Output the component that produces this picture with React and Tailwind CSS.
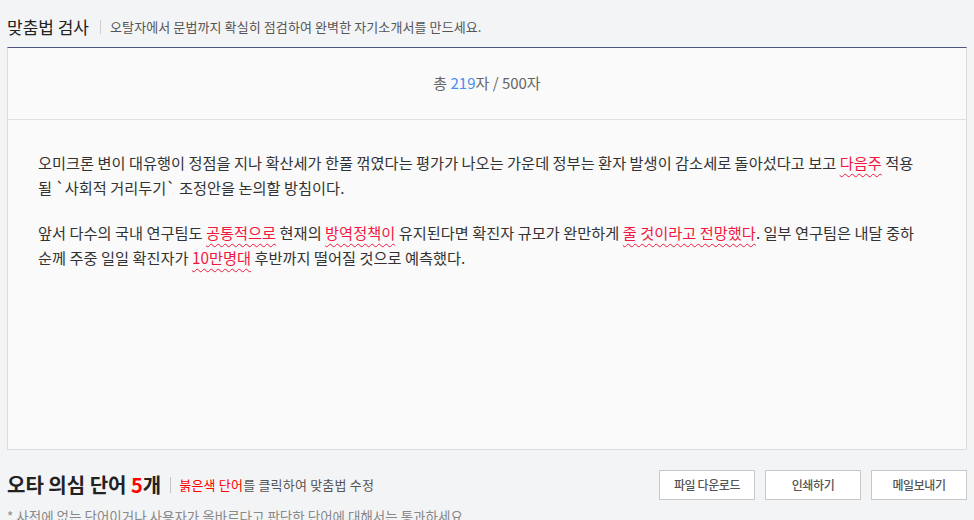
import React from 'react'

const FONT = { fontFamily: '"Noto Sans CJK KR", "Noto Sans", sans-serif' }

// 오타 의심 단어 (붉은 물결 밑줄)
function Typo({ children }) {
  return (
    <span className="text-[#f2173f] underline decoration-wavy decoration-[#f2173f] decoration-1 underline-offset-[4px] cursor-pointer">
      {children}
    </span>
  )
}

function Button({ children }) {
  return (
    <button className="w-[96px] h-[30px] bg-white border border-[#c8c8c8] text-[12px] font-medium tracking-[-0.4px] text-[#555]">
      {children}
    </button>
  )
}

export default function App() {
  return (
    <div style={FONT} className="w-[974px] h-[520px] overflow-hidden bg-[#f3f4f6] px-[7px]">
      {/* ── 헤더 ── */}
      <header className="h-[47px] pt-[7px] flex items-center">
        <h1 className="text-[17px] text-[#222]">맞춤법 검사</h1>
        <span className="ml-[11px] mr-[9px] w-px h-[14px] bg-[#d0d0d0]" />
        <p className="text-[13px] tracking-[0.1px] text-[#555]">오탈자에서 문법까지 확실히 점검하여 완벽한 자기소개서를 만드세요.</p>
      </header>

      {/* ── 검사 패널 ── */}
      <section className="w-[960px] bg-[#fafafa] border-t border-t-[#4b5380] border-x border-b border-x-[#dcdcdc] border-b-[#dcdcdc]">
        <div className="h-[72px] border-b border-[#e0e0e0] flex items-center justify-center text-[15px] text-[#666]">
          <span>총&nbsp;<span className="text-[#4a8ef0]">219</span>자 / 500자</span>
        </div>
        <div className="h-[329px] px-[30px] pt-[30px] text-[15.25px] leading-[25px] text-[#333] whitespace-nowrap">
          <p>
            오미크론 변이 대유행이 정점을 지나 확산세가 한풀 꺾였다는 평가가 나오는 가운데 정부는 환자 발생이 감소세로 돌아섰다고 보고 <Typo>다음주</Typo> 적용
            <br />
            될 `사회적 거리두기` 조정안을 논의할 방침이다.
          </p>
          <p className="mt-[20px]">
            앞서 다수의 국내 연구팀도 <Typo>공통적으로</Typo> 현재의 <Typo>방역정책이</Typo> 유지된다면 확진자 규모가 완만하게 <Typo>줄 것이라고 전망했다</Typo>. 일부 연구팀은 내달 중하
            <br />
            순께 주중 일일 확진자가 <Typo>10만명대</Typo> 후반까지 떨어질 것으로 예측했다.
          </p>
        </div>
      </section>

      {/* ── 하단 ── */}
      <div className="mt-[20px] h-[30px] flex items-center justify-between w-[960px]">
        <div className="flex items-center">
          <h2 className="text-[20px] font-bold text-[#222]">
            오타 의심 단어 <span className="text-[#ff0000]">5</span>개
          </h2>
          <span className="ml-[9px] mr-[8px] w-px h-[16px] bg-[#c4c4c4]" />
          <p className="text-[13px] tracking-[0.2px] text-[#555]">
            <span className="text-[#ff0000]">붉은색 단어</span>를 클릭하여 맞춤법 수정
          </p>
        </div>
        <div className="flex gap-[10px]">
          <Button>파일 다운로드</Button>
          <Button>인쇄하기</Button>
          <Button>메일보내기</Button>
        </div>
      </div>
      <p className="mt-[8px] text-[13.5px] leading-[16px] text-[#888]">
        * 사전에 없는 단어이거나 사용자가 올바르다고 판단한 단어에 대해서는 통과하세요.
      </p>
    </div>
  )
}
